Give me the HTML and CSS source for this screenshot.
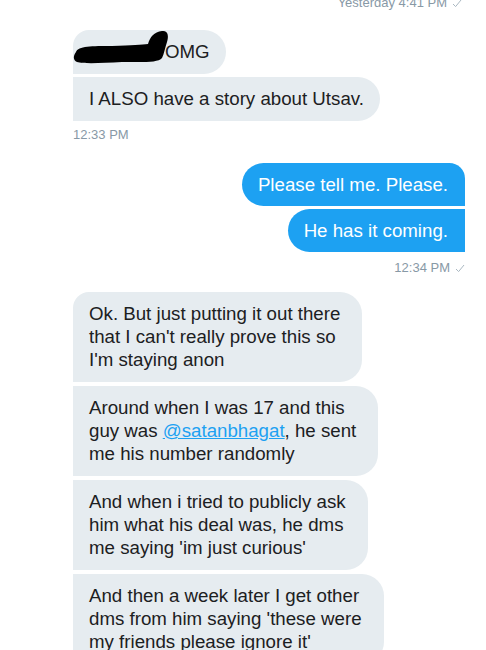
FILE: index.html
```html
<!DOCTYPE html>
<html lang="en">
<head>
    <meta charset="UTF-8">
    <meta name="viewport" content="width=device-width, initial-scale=1.0">
    <title>Messages</title>
    <link rel="stylesheet" href="styles.css">
</head>
<body>

<div class="conversa">

    <div class="hora hora-direita hora-topo">
        Yesterday 4:41 PM
        <svg class="check" width="10" height="9" viewBox="0 0 10 9"><path d="M1 5 L3.6 7.6 L9 1" fill="none" stroke="#aab8c2" stroke-width="1"/></svg>
    </div>

    <div class="grupo recebido">
        <div class="balao curto primeiro tarjado">
            <svg class="tarja" width="100" height="40" viewBox="0 0 100 40">
                <path d="M4 22 C6 16 20 16 40 16 C60 15 70 15 76 14 C78 7 82 2 90 1 C96 0 97 6 95 12 C93 18 92 24 90 28 C86 33 70 32 50 32 C30 33 12 34 5 32 C1 30 1 26 4 22 Z" fill="#000"/>
            </svg>
            <span class="oculto"></span>OMG
        </div>
        <div class="balao curto">I ALSO have a story about Utsav.</div>
    </div>
    <div class="hora">12:33 PM</div>

    <div class="grupo enviado">
        <div class="balao primeiro">Please tell me. Please.</div>
        <div class="balao">He has it coming.</div>
    </div>
    <div class="hora hora-direita">
        12:34 PM
        <svg class="check" width="10" height="9" viewBox="0 0 10 9"><path d="M1 5 L3.6 7.6 L9 1" fill="none" stroke="#aab8c2" stroke-width="1"/></svg>
    </div>

    <div class="grupo recebido longo">
        <div class="balao primeiro">Ok. But just putting it out there<br>that I can't really prove this so<br>I'm staying anon</div>
        <div class="balao">Around when I was 17 and this<br>guy was <a href="#">@satanbhagat</a>, he sent<br>me his number randomly</div>
        <div class="balao">And when i tried to publicly ask<br>him what his deal was, he dms<br>me saying 'im just curious'</div>
        <div class="balao">And then a week later I get other<br>dms from him saying 'these were<br>my friends please ignore it'</div>
    </div>

</div>

</body>
</html>
```

FILE: styles.css
```css
body {
    background-color: #ffffff;
    color: #1c2022;
    font-family: 'Liberation Sans', Arial, sans-serif;
    margin: 0;
    overflow: hidden;
}
.conversa {
    display: flex;
    flex-direction: column;
    padding: 0 21px 0 73px;
}
.hora {
    font-size: 13px;
    line-height: 16px;
    color: #8899a6;
    margin-top: 6px;
    display: flex;
    align-items: center;
    gap: 5px;
}
.hora-direita {
    align-self: flex-end;
    margin-top: 8px;
}
.hora-topo {
    margin-top: -5px;
    margin-right: 3px;
}
.check {
    display: block;
}
.grupo {
    display: flex;
    flex-direction: column;
    gap: 3px;
}
.balao {
    font-size: 18.7px;
    line-height: 23px;
    padding: 10px 22px 11px 16px;
    box-sizing: border-box;
    white-space: nowrap;
}
.recebido {
    align-items: flex-start;
    margin-top: 19px;
}
.recebido .balao {
    background-color: #e6ecf0;
    border-radius: 0 22px 22px 0;
}
.recebido .balao.curto {
    padding-right: 16px;
}
.recebido .balao.primeiro {
    border-top-left-radius: 16px;
}
.longo {
    gap: 4px;
}
.enviado {
    align-items: flex-end;
    margin-top: 20px;
}
.enviado .balao {
    background-color: #1da1f2;
    color: #ffffff;
    border-radius: 22px 0 0 22px;
    padding: 10px 17px 10px 16px;
}
.enviado .balao.primeiro {
    border-top-right-radius: 16px;
}
.hora + .recebido {
    margin-top: 16px;
}
.hora-topo + .recebido {
    margin-top: 19px;
}
.balao a {
    color: #1da1f2;
    text-decoration: underline;
}
.tarjado {
    position: relative;
}
.tarja {
    position: absolute;
    left: -1px;
    top: 0;
}
.oculto {
    display: inline-block;
    width: 76px;
}
```
